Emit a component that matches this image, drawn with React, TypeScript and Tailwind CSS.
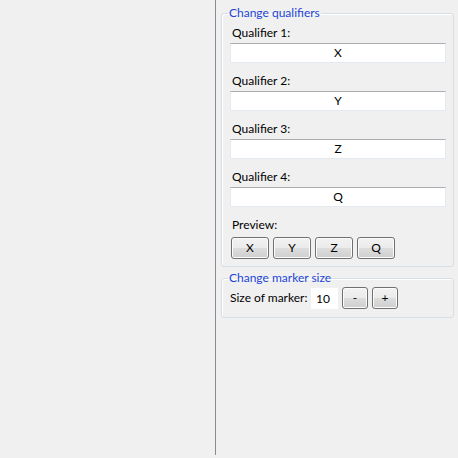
const font = { fontFamily: 'Lato, "Open Sans", Arial, sans-serif' };

const qualifiers = [
  { label: 'Qualifier 1:', value: 'X' },
  { label: 'Qualifier 2:', value: 'Y' },
  { label: 'Qualifier 3:', value: 'Z' },
  { label: 'Qualifier 4:', value: 'Q' },
];

function WinButton({ children, className = '' }: { children: React.ReactNode; className?: string }) {
  return (
    <button
      className={`h-[22px] rounded-[3px] border border-[#707070] bg-[linear-gradient(to_bottom,#f2f2f2_0%,#ebebeb_50%,#dddddd_50%,#cfcfcf_100%)] shadow-[inset_0_0_0_1px_#fcfcfc] text-[12px] leading-4 text-black flex items-center justify-center ${className}`}
    >
      {children}
    </button>
  );
}

function GroupBox({ title, children, className = '' }: { title: string; children: React.ReactNode; className?: string }) {
  return (
    <fieldset className={`rounded-[3px] border border-[#d5dfe5] shadow-[inset_1px_1px_0_#ffffff] p-0 ${className}`}>
      <legend className="ml-[6px] px-[1px] text-[12px] leading-4 text-[#1c45d6] whitespace-nowrap">{title}</legend>
      {children}
    </fieldset>
  );
}

export default function App() {
  return (
    <div className="w-[458px] h-[458px] bg-[#f0f0f0] flex overflow-hidden text-black" style={font}>
      <div className="w-[215px]" />
      <div className="w-px h-[455px] bg-[#8a8a92]" />
      <div className="flex-1 flex flex-col pl-[5px] pr-[4px]">
        <GroupBox title="Change qualifiers" className="mt-[5px]">
          <div className="flex flex-col gap-[10px] pt-[4px] pl-[8px] pr-[7px] pb-[7px]">
            {qualifiers.map(q => (
              <div key={q.label} className="flex flex-col">
                <span className="pl-[2px] text-[12px] leading-4">{q.label}</span>
                <div className="mt-[2px] h-[20px] bg-white border border-[#e3e9ef] border-t-[#abadb3] flex items-center justify-center text-[12px]">
                  {q.value}
                </div>
              </div>
            ))}
            <div className="flex flex-col">
              <span className="pl-[2px] text-[12px] leading-4">Preview:</span>
              <div className="mt-[4px] pl-[1px] flex gap-[4px]">
                {qualifiers.map(q => (
                  <WinButton key={q.value} className="w-[38px]">{q.value}</WinButton>
                ))}
              </div>
            </div>
          </div>
        </GroupBox>
        <GroupBox title="Change marker size" className="mt-[3px]">
          <div className="flex items-start pt-[1px] pl-[8px] pr-[7px] pb-[8px]">
            <span className="w-[81px] h-[22px] flex items-center whitespace-nowrap text-[12px]">Size of marker:</span>
            <div className="w-[27px] h-[21px] mt-[1px] bg-white pl-[5px] flex items-center text-[12px]">10</div>
            <WinButton className="w-[26px] ml-[4px]">-</WinButton>
            <WinButton className="w-[26px] ml-[4px]">+</WinButton>
          </div>
        </GroupBox>
      </div>
    </div>
  );
}
